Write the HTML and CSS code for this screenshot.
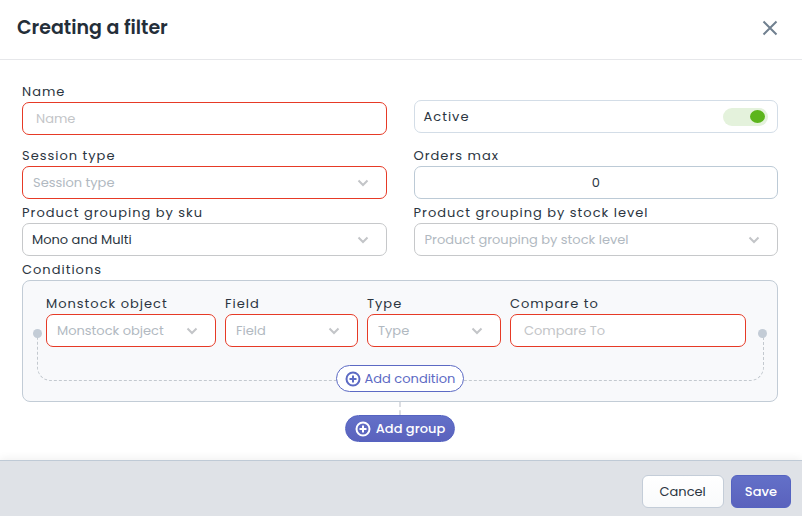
FILE: index.html
```html
<!DOCTYPE html>
<html lang="en">

<head>
    <meta charset="utf-8">
    <meta name="viewport" content="width=device-width, initial-scale=1.0">
    <title>Creating a filter</title>
    <link rel="stylesheet" href="styles.css">
</head>

<body>

    <header class="header">
        <h1>Creating a filter</h1>
        <button class="close" type="button" aria-label="Close">
            <svg width="16" height="16" viewBox="0 0 16 16"><path d="M1.5 1.5l13 13M14.5 1.5l-13 13"/></svg>
        </button>
    </header>

    <form class="form" id="filter">
        <div class="row first">
            <div class="field">
                <label for="name">Name</label>
                <input class="control error" id="name" type="text" placeholder="Name">
            </div>
            <div class="control active">
                <label for="active">Active</label>
                <input class="switch" id="active" type="checkbox" checked>
            </div>
        </div>

        <div class="row">
            <div class="field">
                <label for="session">Session type</label>
                <div class="select">
                    <select class="control error empty" id="session"><option>Session type</option></select>
                    <svg class="arrow" width="12" height="8" viewBox="0 0 12 8"><path d="M1.5 1.5L6 6l4.500-4.500"/></svg>
                </div>
            </div>
            <div class="field">
                <label for="orders">Orders max</label>
                <input class="control number" id="orders" type="text" inputmode="numeric" value="0">
            </div>
        </div>

        <div class="row">
            <div class="field">
                <label for="sku">Product grouping by sku</label>
                <div class="select">
                    <select class="control grey" id="sku"><option>Mono and Multi</option></select>
                    <svg class="arrow" width="12" height="8" viewBox="0 0 12 8"><path d="M1.5 1.5L6 6l4.500-4.500"/></svg>
                </div>
            </div>
            <div class="field">
                <label for="stock">Product grouping by stock level</label>
                <div class="select">
                    <select class="control grey empty" id="stock"><option>Product grouping by stock level</option></select>
                    <svg class="arrow" width="12" height="8" viewBox="0 0 12 8"><path d="M1.5 1.5L6 6l4.500-4.500"/></svg>
                </div>
            </div>
        </div>

        <h2>Conditions</h2>
        <section class="group">
            <div class="bracket"></div>
            <div class="condition">
                <div class="field">
                    <label for="object">Monstock object</label>
                    <div class="select">
                        <select class="control error empty" id="object"><option>Monstock object</option></select>
                        <svg class="arrow" width="12" height="8" viewBox="0 0 12 8"><path d="M1.5 1.5L6 6l4.500-4.500"/></svg>
                    </div>
                </div>
                <div class="field">
                    <label for="field">Field</label>
                    <div class="select">
                        <select class="control error empty" id="field"><option>Field</option></select>
                        <svg class="arrow" width="12" height="8" viewBox="0 0 12 8"><path d="M1.5 1.5L6 6l4.500-4.500"/></svg>
                    </div>
                </div>
                <div class="field">
                    <label for="type">Type</label>
                    <div class="select">
                        <select class="control error empty" id="type"><option>Type</option></select>
                        <svg class="arrow" width="12" height="8" viewBox="0 0 12 8"><path d="M1.5 1.5L6 6l4.500-4.500"/></svg>
                    </div>
                </div>
                <div class="field">
                    <label for="compare">Compare to</label>
                    <input class="control error" id="compare" type="text" placeholder="Compare To">
                </div>
            </div>
            <button class="add" type="button">
                <svg width="16" height="16" viewBox="0 0 16 16"><circle cx="8" cy="8" r="6.500"/><path d="M8 4.500v7M4.500 8h7"/></svg>
                Add condition
            </button>
        </section>

        <div class="more">
            <button class="add filled" type="button">
                <svg width="16" height="16" viewBox="0 0 16 16"><circle cx="8" cy="8" r="6.500"/><path d="M8 4.500v7M4.500 8h7"/></svg>
                Add group
            </button>
        </div>
    </form>

    <footer class="footer">
        <button class="btn" type="button">Cancel</button>
        <button class="btn save" type="submit" form="filter">Save</button>
    </footer>

</body>

</html>
```
FILE: styles.css
```css
* {
    box-sizing: border-box;
}

body {
    display: flex;
    flex-direction: column;
    min-height: 100vh;
    margin: 0;
    background: #fff;
    color: #2b3541;
    font-family: Poppins, Inter, sans-serif;
    font-size: 13px;
    line-height: 20px;
}

button, input, select {
    font: inherit;
    color: inherit;
}

button {
    cursor: pointer;
}

svg {
    display: block;
    fill: none;
    stroke: currentColor;
    stroke-width: 2;
}

.header {
    display: flex;
    align-items: center;
    justify-content: space-between;
    padding: 14px 24px 17px 17px;
    border-bottom: 1px solid #e6e7ea;
}

h1 {
    margin: 0;
    color: #242e39;
    font-size: 19px;
    font-weight: 600;
    line-height: 28px;
}

.close {
    padding: 0;
    border: 0;
    background: none;
    color: #718090;
}

.form {
    flex: 1;
    padding: 22px 24px 18px 22px;
}

.row {
    display: grid;
    grid-template-columns: 1fr 1fr;
    gap: 27px;
    align-items: start;
    margin-bottom: 4px;
}

.first {
    margin-bottom: 11px;
}

label, h2 {
    display: block;
    margin: 0;
    font-size: 13px;
    font-weight: 400;
    line-height: 20px;
    letter-spacing: 1px;
}

.control {
    display: block;
    width: 100%;
    height: 33px;
    margin: 0;
    padding: 0 13px;
    border: 1px solid #bccad6;
    border-radius: 7px;
    outline: 0;
    background: #fff;
}

select.control {
    appearance: none;
    padding: 0 36px 0 9px;
}

.control.error {
    border-color: #e63a26;
}

.control.grey {
    border-color: #c6c8ca;
}

.control.empty {
    padding-left: 10px;
    color: #b1b9c1;
}

.control::placeholder {
    color: #c3c5c8;
    opacity: 1;
}

.number {
    text-align: center;
}

.select {
    position: relative;
}

.arrow {
    position: absolute;
    top: 13px;
    right: 18px;
    color: #c3c5c8;
    pointer-events: none;
}

.active {
    display: flex;
    align-items: center;
    justify-content: space-between;
    margin-top: 18px;
    padding: 0 9px;
    border-color: #d3dde7;
}

.switch {
    appearance: none;
    display: flex;
    align-items: center;
    justify-content: flex-end;
    width: 45px;
    height: 18px;
    margin: 0;
    padding: 0 3px;
    border-radius: 9px;
    background: #e4f2dc;
}

.switch::before {
    content: "";
    width: 15px;
    height: 13px;
    border-radius: 50%;
    background: #5cb51c;
}

.group {
    position: relative;
    display: flex;
    flex-direction: column;
    align-items: center;
    gap: 18px;
    padding: 13px 31px 9px 23px;
    border: 1px solid #c2ccd6;
    border-radius: 8px;
    background: #f8f9fb;
}

.condition {
    display: grid;
    grid-template-columns: 170fr 133fr 134fr 236fr;
    gap: 9px;
    width: 100%;
}

.field {
    min-width: 0;
}

/* dashed line that joins both ends of the condition row */
.bracket {
    position: absolute;
    top: 53px;
    right: 13px;
    bottom: 20px;
    left: 14px;
    border: 1px dashed #c3c9cf;
    border-top: 0;
    border-radius: 0 0 14px 14px;
}

.bracket::before, .bracket::after {
    content: "";
    position: absolute;
    top: -5px;
    width: 9px;
    height: 9px;
    border-radius: 50%;
    background: #c3ccd6;
}

.bracket::before {
    left: -5px;
}

.bracket::after {
    right: -4px;
}

.add {
    position: relative;
    display: flex;
    align-items: center;
    gap: 4px;
    height: 27px;
    padding: 0 8px;
    border: 1px solid #5c6ac4;
    border-radius: 14px;
    background: #fff;
    color: #5c6ac4;
}

.group .add {
    margin-left: 8px;
}

.filled, .save {
    border-color: #5563c1;
    background: linear-gradient(#6370c8, #5a62bd);
    color: #fff;
}

.filled {
    gap: 5px;
    padding: 0 9px;
    font-weight: 500;
}

.more {
    display: flex;
    flex-direction: column;
    align-items: center;
}

.more::before {
    content: "";
    height: 13px;
    border-left: 2px dashed #dcdee3;
}

.footer {
    display: flex;
    justify-content: flex-end;
    gap: 7px;
    padding: 14px 11px 8px;
    border-top: 1px solid #bfcad6;
    background: #dfe2e7;
    box-shadow: 0 -2px 8px rgba(0, 0, 0, .06);
}

.btn {
    height: 33px;
    padding: 0 17px;
    border: 1px solid #c4cdd8;
    border-radius: 6px;
    background: linear-gradient(#fff, #f9fafb);
}

.save {
    padding: 0 13px;
    border-color: #5563c1;
    background: linear-gradient(#6370c8, #5a62bd);
    font-weight: 500;
}
```
